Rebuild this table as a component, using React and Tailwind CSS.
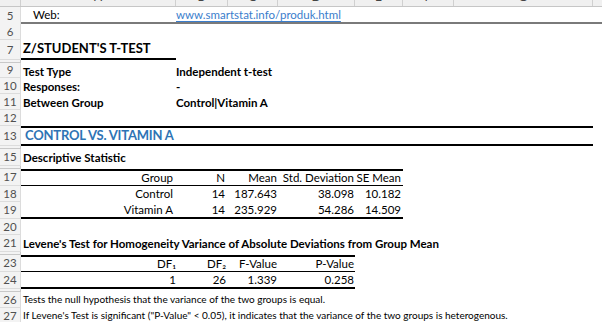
import React from "react";

const font = "font-['Lato','Liberation_Sans',sans-serif]";

// one spreadsheet row: grey number gutter + cell area
function Row({ num, h, children, className = "" }) {
  return (
    <div className={`flex ${h}`}>
      <div className="w-[21px] shrink-0 bg-[#f3f3f3] border-r border-b border-[#dcdcdc] flex items-center justify-center text-[11.5px] text-[#505050]">
        {num}
      </div>
      <div className={`flex-1 flex items-stretch ${className}`}>{children}</div>
    </div>
  );
}

function Hidden() {
  return (
    <div className="flex h-[3px]">
      <div className="w-[21px] shrink-0 bg-[#f3f3f3] border-r border-b border-[#c8c8c8]"></div>
      <div className="flex-1"></div>
    </div>
  );
}

const cols = ["w-[155px]", "w-[52px]", "w-[50px]", "w-[77px]", "w-[48px]", "w-[51px]", "w-[139px]"];

export default function App() {
  return (
    <div className={`w-[602px] h-[322px] overflow-hidden bg-white text-black ${font}`}>
      {/* column letters, mostly scrolled off the top */}
      <div className="flex h-[22px] -mt-[15px] bg-[#f0f0f0] border-b border-[#c6c6c6] text-[12px] text-[#444]">
        <div className="w-[21px] shrink-0 border-r border-[#d0d0d0]"></div>
        {["A", "B", "C", "D", "E", "F", "G"].map((c, i) => (
          <div key={c} className={`${cols[i]} shrink-0 border-r border-[#d0d0d0] flex items-end justify-center leading-[18px]`}>
            {c}
          </div>
        ))}
        <div className="flex-1"></div>
      </div>

      <div className="flex h-[17px]">
        <div className="w-[21px] shrink-0 bg-[#f3f3f3] border-r border-[#dcdcdc] flex items-center justify-center text-[11.5px] text-[#505050]">5</div>
        <div className="flex-1 flex items-center border-b-2 border-[#7a7a7a] text-[11.5px]">
          <span className="w-[155px] pl-[12px]">Web:</span>
          <span className="text-[#3a7dcc] underline underline-offset-2">www.smartstat.info/produk.html</span>
        </div>
      </div>

      <Row num="6" h="h-[16px]"></Row>

      <Row num="7" h="h-[20px]">
        <div className="w-[155px] border-b-2 border-black flex items-center pl-[2px] font-bold text-[13px]">
          Z/STUDENT'S T-TEST
        </div>
      </Row>
      <Hidden />

      <Row num="9" h="h-[15px]" className="items-center font-bold text-[11.5px]">
        <span className="w-[155px] pl-[2px]">Test Type</span>
        <span>Independent t-test</span>
      </Row>
      <Row num="10" h="h-[16px]" className="items-center font-bold text-[11.5px]">
        <span className="w-[155px] pl-[2px]">Responses:</span>
        <span>-</span>
      </Row>
      <Row num="11" h="h-[16px]" className="items-center font-bold text-[11.5px]">
        <span className="w-[155px] pl-[2px]">Between Group</span>
        <span>Control|Vitamin A</span>
      </Row>
      <Row num="12" h="h-[16px]"></Row>

      <Row num="13" h="h-[20px]">
        <div className="w-[572px] border-y-2 border-black flex items-center pl-[4px] font-bold text-[13px] tracking-[-0.2px] text-[#2e74b5]">
          CONTROL VS. VITAMIN A
        </div>
      </Row>
      <Hidden />

      <Row num="15" h="h-[17px]" className="items-center font-bold text-[11.5px]">
        <span className="pl-[2px]">Descriptive Statistic</span>
      </Row>
      <Hidden />

      <Row num="17" h="h-[17px]">
        <div className="flex w-[382px] border-t-2 border-b border-black text-[11.5px] items-center text-right">
          <span className="w-[152px]">Group</span>
          <span className="w-[52px]">N</span>
          <span className="w-[52px]">Mean</span>
          <span className="w-[77px]">Std. Deviation</span>
          <span className="w-[47px]">SE Mean</span>
        </div>
      </Row>
      <Row num="18" h="h-[16px]">
        <div className="flex w-[382px] text-[11.5px] items-center text-right">
          <span className="w-[152px]">Control</span>
          <span className="w-[52px]">14</span>
          <span className="w-[52px]">187.643</span>
          <span className="w-[77px]">38.098</span>
          <span className="w-[47px]">10.182</span>
        </div>
      </Row>
      <Row num="19" h="h-[17px]">
        <div className="flex w-[382px] border-b-2 border-black text-[11.5px] items-center text-right">
          <span className="w-[152px]">Vitamin A</span>
          <span className="w-[52px]">14</span>
          <span className="w-[52px]">235.929</span>
          <span className="w-[77px]">54.286</span>
          <span className="w-[47px]">14.509</span>
        </div>
      </Row>
      <Row num="20" h="h-[16px]"></Row>

      <Row num="21" h="h-[17px]" className="items-center font-bold text-[11.5px]">
        <span className="pl-[2px]">Levene's Test for Homogeneity Variance of Absolute Deviations from Group Mean</span>
      </Row>
      <Hidden />

      <Row num="23" h="h-[17px]">
        <div className="flex w-[334px] border-t-2 border-b border-black text-[11.5px] items-center text-right">
          <span className="w-[155px]">DF₁</span>
          <span className="w-[50px]">DF₂</span>
          <span className="w-[51px]">F-Value</span>
          <span className="w-[77px]">P-Value</span>
        </div>
      </Row>
      <Row num="24" h="h-[17px]">
        <div className="flex w-[334px] border-b-2 border-black text-[11.5px] items-center text-right">
          <span className="w-[155px]">1</span>
          <span className="w-[50px]">26</span>
          <span className="w-[51px]">1.339</span>
          <span className="w-[77px]">0.258</span>
        </div>
      </Row>
      <Hidden />

      <Row num="26" h="h-[16px]" className="items-center text-[10px]">
        <span className="pl-[2px]">Tests the null hypothesis that the variance of the two groups is equal.</span>
      </Row>
      <Row num="27" h="h-[16px]" className="items-center text-[10px]">
        <span className="pl-[2px]">If Levene's Test is significant ("P-Value" &lt; 0.05), it indicates that the variance of the two groups is heterogenous.</span>
      </Row>
      <Row num="28" h="h-[16px]"></Row>
    </div>
  );
}
